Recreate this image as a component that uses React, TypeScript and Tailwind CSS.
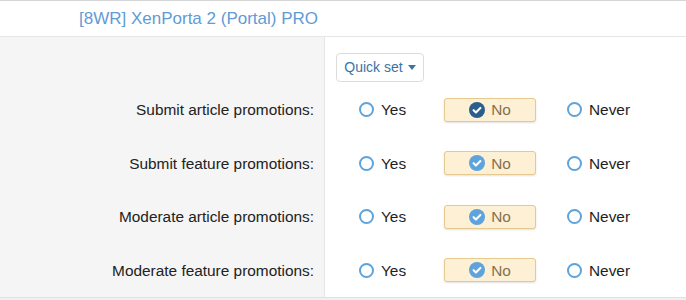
const rows = [
  { label: 'Submit article promotions:', focused: true },
  { label: 'Submit feature promotions:', focused: false },
  { label: 'Moderate article promotions:', focused: false },
  { label: 'Moderate feature promotions:', focused: false },
];

function Radio() {
  return <span className="w-[15px] h-[15px] rounded-full border-2 border-[#5ea3dc] bg-white shrink-0" />;
}

function Checked({ dark }: { dark: boolean }) {
  return (
    <svg width="16" height="16" viewBox="0 0 16 16" className="shrink-0">
      <circle cx="8" cy="8" r="8" fill={dark ? '#2a5e8c' : '#5ea3dc'} />
      <path d="M4.6 8.2l2.3 2.3 4.5-4.6" fill="none" stroke="#fff" strokeWidth="2.1" strokeLinecap="round" strokeLinejoin="round" />
    </svg>
  );
}

export default function App() {
  return (
    <div className="w-[686px] h-[300px] bg-[#eef0f4] border-t border-[#d6d6d6] overflow-hidden font-['Liberation_Sans',Arial,sans-serif]">
      <div className="h-[36px] bg-white border-b border-[#e6e6e6] flex items-center pl-[79px] text-[17px] text-[#5f9bd5]">
        [8WR] XenPorta 2 (Portal) PRO
      </div>
      <div className="border-b border-[#dde1e8]">
        <div className="flex h-[46px]">
          <div className="w-[325px] bg-[#f5f5f5] border-r border-[#e6e6e6]" />
          <div className="flex-1 bg-white pl-[11px] pt-[16px]">
            <button className="h-[29px] w-[88px] border border-[#dcdcdc] rounded-[4px] bg-white text-[14px] text-[#3c73a5] flex items-center justify-center gap-[5px]">
              Quick set
              <span className="w-0 h-0 border-l-[4px] border-r-[4px] border-t-[5px] border-l-transparent border-r-transparent border-t-[#3c73a5]" />
            </button>
          </div>
        </div>
        {rows.map((r) => (
          <div key={r.label} className="flex h-[53.5px]">
            <div className="w-[325px] bg-[#f5f5f5] border-r border-[#e6e6e6] flex items-center justify-end pr-[10px] text-[15.4px] text-[#222]">
              {r.label}
            </div>
            <div className="flex-1 bg-white flex items-center pl-[34px] text-[15.4px] text-[#1e1e1e]">
              <div className="w-[85px] flex items-center gap-[7px]">
                <Radio />
                <span>Yes</span>
              </div>
              <div className="w-[92px] h-[24px] rounded-[3px] border border-[#e5c98f] bg-[#fdf0d5] shadow-[0_1px_2px_rgba(0,0,0,0.12)] flex items-center justify-center gap-[6px] text-[#85704d]">
                <Checked dark={r.focused} />
                <span>No</span>
              </div>
              <div className="ml-[31px] flex items-center gap-[7px]">
                <Radio />
                <span>Never</span>
              </div>
            </div>
          </div>
        ))}
      </div>
    </div>
  );
}
